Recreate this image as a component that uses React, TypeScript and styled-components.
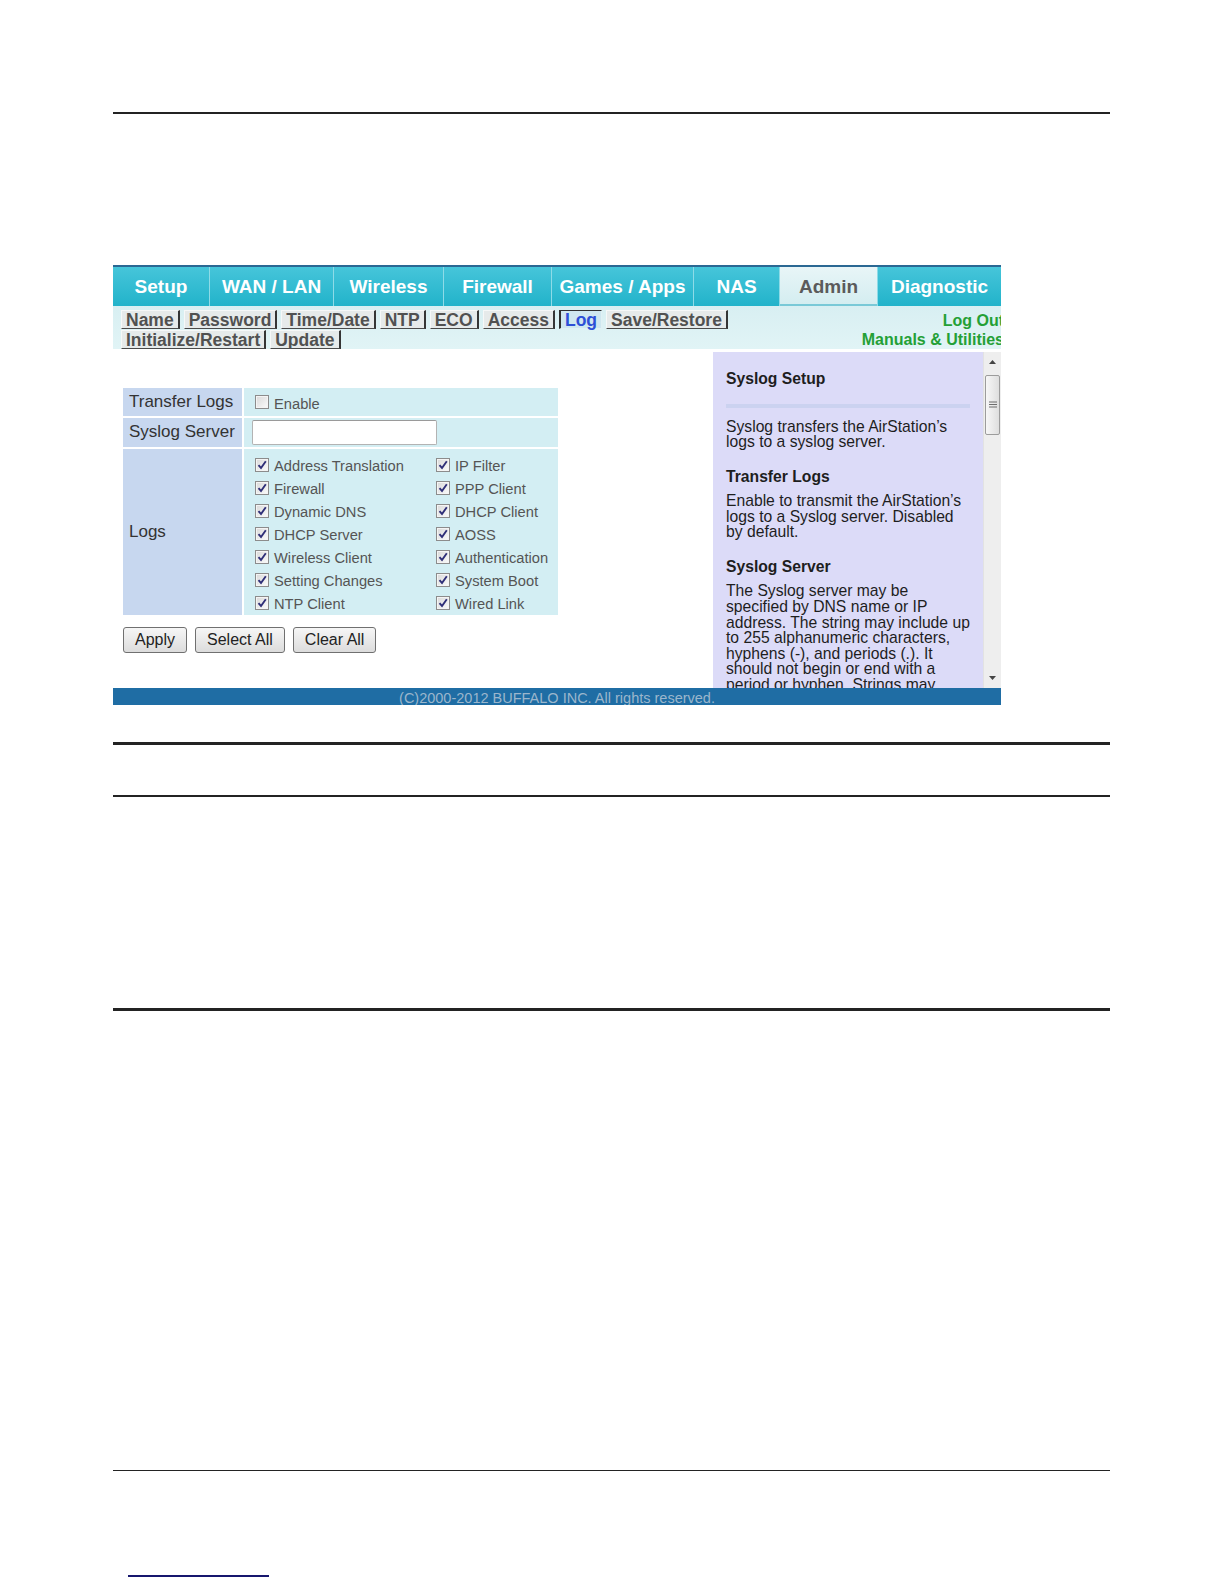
import React from "react";
import styled, { createGlobalStyle } from "styled-components";

const GlobalStyle = createGlobalStyle`
    html, body {
        margin: 0;
        padding: 0;
        background: #ffffff;
    }
    body {
        font-family: "Liberation Sans", Arial, sans-serif;
    }
`;

const TABS = [
    { label: "Setup", w: 96 },
    { label: "WAN / LAN", w: 124 },
    { label: "Wireless", w: 110 },
    { label: "Firewall", w: 108 },
    { label: "Games / Apps", w: 142 },
    { label: "NAS", w: 86 },
    { label: "Admin", w: 98, active: true },
    { label: "Diagnostic", w: 124 },
];

const SUB_ROWS = [
    ["Name", "Password", "Time/Date", "NTP", "ECO", "Access", "Log", "Save/Restore"],
    ["Initialize/Restart", "Update"],
];

const LOG_ITEMS = [
    "Address Translation",
    "IP Filter",
    "Firewall",
    "PPP Client",
    "Dynamic DNS",
    "DHCP Client",
    "DHCP Server",
    "AOSS",
    "Wireless Client",
    "Authentication",
    "Setting Changes",
    "System Boot",
    "NTP Client",
    "Wired Link",
];

const Page = styled.div`
    width: 1224px;
    height: 1584px;
    padding: 112px 0 0 113px;
    box-sizing: border-box;
    overflow: hidden;
`;

const Rule = styled.div<{ $top: number; $weight: number }>`
    margin-top: ${(p) => p.$top}px;
    height: ${(p) => p.$weight}px;
    width: 997px;
    background: #232323;
`;

const LinkLine = styled.div`
    margin: 104px 0 0 15px;
    width: 141px;
    height: 1.5px;
    background: #17176e;
`;

const Frame = styled.div`
    margin-top: 151px;
    width: 888px;
    height: 440px;
    border-top: 2px solid #2b6893;
    box-sizing: border-box;
    display: flex;
    flex-direction: column;
    overflow: hidden;
`;

const TabBar = styled.div`
    display: flex;
    height: 39px;
    flex-shrink: 0;
    background: linear-gradient(#46c5da, #22b3ca);
`;

const Tab = styled.div<{ $w: number; $active?: boolean }>`
    width: ${(p) => p.$w}px;
    box-sizing: border-box;
    border-left: 1px solid #8edbe7;
    &:first-child {
        border-left: none;
    }
    text-align: center;
    line-height: 39px;
    font-size: 19px;
    font-weight: bold;
    color: ${(p) => (p.$active ? "#5b5b5b" : "#ffffff")};
    background: ${(p) => (p.$active ? "linear-gradient(#e8f5f7, #d3edf0)" : "transparent")};
    box-shadow: ${(p) => (p.$active ? "inset 0 -2px 0 #79c9d7" : "none")};
`;

const SubNav = styled.div`
    height: 43px;
    flex-shrink: 0;
    display: flex;
    justify-content: space-between;
    padding: 4px 0 0 8px;
    box-sizing: border-box;
    background: linear-gradient(#d8eff2, #e1f4f6);
`;

const SubRows = styled.div`
    display: flex;
    flex-direction: column;
    gap: 1px;
`;

const SubRow = styled.div`
    display: flex;
    height: 19px;
`;

const SubTab = styled.span<{ $active?: boolean }>`
    display: block;
    height: 19px;
    box-sizing: border-box;
    padding: 0 4px;
    line-height: 18px;
    font-size: 17.5px;
    font-weight: bold;
    white-space: nowrap;
    color: ${(p) => (p.$active ? "#2d4fd6" : "#515151")};
    background: ${(p) => (p.$active ? "#cfe7ef" : "#e6eaea")};
    border-top: 1px solid ${(p) => (p.$active ? "#2f2f2f" : "#f6f8f8")};
    border-left: ${(p) => (p.$active ? "2px solid #2f2f2f" : "1px solid #f6f8f8")};
    border-right: ${(p) => (p.$active ? "1px solid #e0f0f4" : "2px solid #353535")};
    border-bottom: 1px solid ${(p) => (p.$active ? "#e0f0f4" : "#4a4a4a")};
    margin-right: 4px;
`;

const SideLinks = styled.div`
    margin-right: -3px;
    padding-top: 1px;
    text-align: right;
    font-size: 16px;
    font-weight: bold;
    line-height: 19px;
    color: #24a036;
    white-space: nowrap;
`;

const Content = styled.div`
    flex: 1;
    display: flex;
    background: #ffffff;
    min-height: 0;
`;

const FormArea = styled.div`
    width: 600px;
    padding: 39px 0 0 10px;
    box-sizing: border-box;
`;

const SettingsTable = styled.div`
    display: grid;
    grid-template-columns: 119px 314px;
    grid-template-rows: 28px 29px 166px;
    gap: 2px;
    width: 435px;
`;

const LabelCell = styled.div`
    display: flex;
    align-items: center;
    padding-left: 6px;
    background: #c7d7ef;
    font-size: 17px;
    color: #333333;
`;

const ValueCell = styled.div<{ $pad?: string }>`
    display: flex;
    align-items: center;
    padding: ${(p) => p.$pad ?? "4px 0 0 11px"};
    box-sizing: border-box;
    background: #d3eef3;
`;

const TextInput = styled.div`
    width: 185px;
    height: 25px;
    box-sizing: border-box;
    background: #ffffff;
    border: 1px solid #b3b3b3;
    border-top-color: #9a9a9a;
    border-radius: 2px;
`;

const LogGrid = styled.div`
    align-self: flex-start;
    display: grid;
    grid-template-columns: 181px 120px;
    grid-auto-rows: 23px;
`;

const CheckItem = styled.label`
    display: flex;
    align-items: center;
    gap: 5px;
    font-size: 14.7px;
    color: #555555;
    white-space: nowrap;
`;

const Box = styled.span`
    width: 14px;
    height: 14px;
    box-sizing: border-box;
    flex-shrink: 0;
    border: 1px solid #8c8c8c;
    background: linear-gradient(135deg, #d9d9d9, #fbfbfb);
    box-shadow: inset 0 0 0 1px #f4f4f4;
    display: flex;
    align-items: center;
    justify-content: center;
    margin-top: -3px;
`;

const ButtonRow = styled.div`
    display: flex;
    gap: 8px;
    margin-top: 12px;
`;

const Button = styled.button`
    height: 26px;
    padding: 0 11px;
    border: 1px solid #707070;
    border-radius: 3px;
    background: linear-gradient(#f6f6f6, #dcdcdc);
    font-family: "Liberation Sans", Arial, sans-serif;
    font-size: 16px;
    color: #222222;
    line-height: 24px;
`;

const HelpWrap = styled.div`
    margin-top: 3px;
    display: flex;
    flex: 1;
`;

const HelpPanel = styled.div`
    width: 270px;
    height: 336px;
    box-sizing: border-box;
    padding: 0 11px 0 13px;
    background: #dcdbf8;
    overflow: hidden;
    color: #1e1e1e;
    font-size: 15.7px;
    line-height: 15.6px;
`;

const HelpTitle = styled.div`
    margin-top: 18px;
    font-weight: bold;
    line-height: 18px;
`;

const HelpRule = styled.div`
    margin-top: 16px;
    height: 4px;
    width: 244px;
    background: #cbd2f0;
`;

const HelpText = styled.p<{ $top?: number }>`
    margin: ${(p) => p.$top ?? 7.5}px 0 0;
`;

const ScrollBar = styled.div`
    width: 18px;
    display: flex;
    flex-direction: column;
    background: #eeeeee;
    border-left: 1px solid #e2e2e2;
    box-sizing: border-box;
`;

const Arrow = styled.div`
    height: 20px;
    display: flex;
    align-items: center;
    justify-content: center;
`;

const Track = styled.div`
    flex: 1;
    padding: 3px 1px 0 1px;
`;

const Thumb = styled.div`
    height: 60px;
    box-sizing: border-box;
    border: 1px solid #9c9c9c;
    border-radius: 2px;
    background: linear-gradient(90deg, #f7f7f7, #dedede);
    display: flex;
    align-items: center;
    justify-content: center;
`;

const Footer = styled.div`
    height: 17px;
    flex-shrink: 0;
    background: #1f6da4;
    text-align: center;
    font-size: 14.5px;
    line-height: 17px;
    padding-top: 2px;
    box-sizing: border-box;
    color: #9bb6cc;
    overflow: hidden;
    white-space: nowrap;
`;

const Check = ({ on }: { on?: boolean }) => (
    <Box>
        {on && (
            <svg width="10" height="10" viewBox="0 0 10 10">
                <path d="M1.5 5.2 L4 8 L8.8 1.2" fill="none" stroke="#2f2f78" strokeWidth="1.9" />
            </svg>
        )}
    </Box>
);

const Grip = () => (
    <svg width="8" height="7" viewBox="0 0 8 7">
        <path d="M0 1H8M0 3.5H8M0 6H8" stroke="#6d6d6d" strokeWidth="1" />
    </svg>
);

const App: React.FC = () => {
    return (
        <>
            <GlobalStyle />
            <Page>
                <Rule $top={0} $weight={1.5} />
                <Frame>
                    <TabBar>
                        {TABS.map((t) => (
                            <Tab key={t.label} $w={t.w} $active={t.active}>
                                {t.label}
                            </Tab>
                        ))}
                    </TabBar>
                    <SubNav>
                        <SubRows>
                            {SUB_ROWS.map((row, i) => (
                                <SubRow key={i}>
                                    {row.map((name) => (
                                        <SubTab key={name} $active={name === "Log"}>
                                            {name}
                                        </SubTab>
                                    ))}
                                </SubRow>
                            ))}
                        </SubRows>
                        <SideLinks>
                            <div>Log Out</div>
                            <div>Manuals &amp; Utilities</div>
                        </SideLinks>
                    </SubNav>
                    <Content>
                        <FormArea>
                            <SettingsTable>
                                <LabelCell>Transfer Logs</LabelCell>
                                <ValueCell>
                                    <CheckItem>
                                        <Check />
                                        Enable
                                    </CheckItem>
                                </ValueCell>
                                <LabelCell>Syslog Server</LabelCell>
                                <ValueCell $pad="0 0 0 8px">
                                    <TextInput />
                                </ValueCell>
                                <LabelCell>Logs</LabelCell>
                                <ValueCell $pad="6px 0 0 11px">
                                    <LogGrid>
                                        {LOG_ITEMS.map((item) => (
                                            <CheckItem key={item}>
                                                <Check on />
                                                {item}
                                            </CheckItem>
                                        ))}
                                    </LogGrid>
                                </ValueCell>
                            </SettingsTable>
                            <ButtonRow>
                                <Button>Apply</Button>
                                <Button>Select All</Button>
                                <Button>Clear All</Button>
                            </ButtonRow>
                        </FormArea>
                        <HelpWrap>
                            <HelpPanel>
                                <HelpTitle>Syslog Setup</HelpTitle>
                                <HelpRule />
                                <HelpText $top={11}>Syslog transfers the AirStation’s logs to a syslog server.</HelpText>
                                <HelpTitle>Transfer Logs</HelpTitle>
                                <HelpText>
                                    Enable to transmit the AirStation’s logs to a Syslog server. Disabled by default.
                                </HelpText>
                                <HelpTitle>Syslog Server</HelpTitle>
                                <HelpText>
                                    The Syslog server may be specified by DNS name or IP address. The string may include
                                    up to 255 alphanumeric characters, hyphens (-), and periods (.). It should not begin
                                    or end with a period or hyphen. Strings may contain no spaces.
                                </HelpText>
                            </HelpPanel>
                            <ScrollBar>
                                <Arrow>
                                    <svg width="7" height="4" viewBox="0 0 7 4">
                                        <path d="M0 4L3.5 0L7 4Z" fill="#444" />
                                    </svg>
                                </Arrow>
                                <Track>
                                    <Thumb>
                                        <Grip />
                                    </Thumb>
                                </Track>
                                <Arrow>
                                    <svg width="7" height="4" viewBox="0 0 7 4">
                                        <path d="M0 0L3.5 4L7 0Z" fill="#444" />
                                    </svg>
                                </Arrow>
                            </ScrollBar>
                        </HelpWrap>
                    </Content>
                    <Footer>(C)2000-2012 BUFFALO INC. All rights reserved.</Footer>
                </Frame>
                <Rule $top={37} $weight={3} />
                <Rule $top={50} $weight={2} />
                <Rule $top={211} $weight={3} />
                <Rule $top={459} $weight={1.5} />
                <LinkLine />
            </Page>
        </>
    );
};

export default App;
